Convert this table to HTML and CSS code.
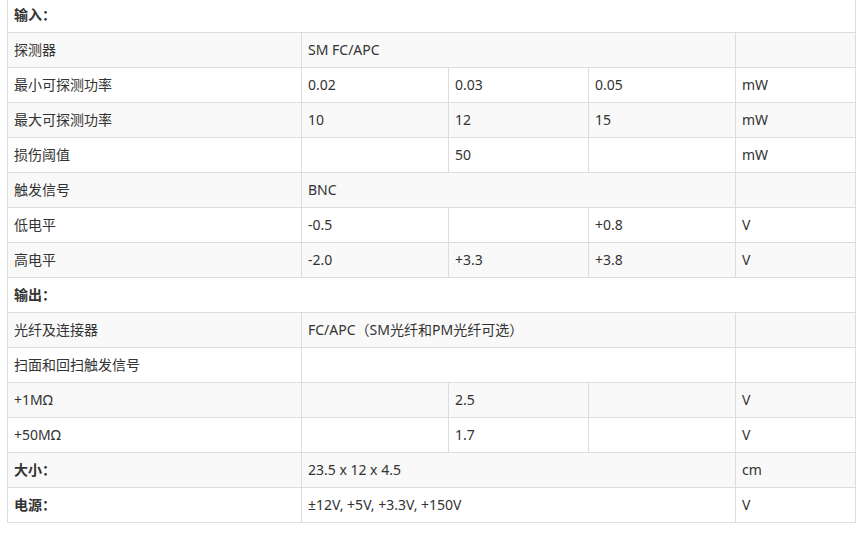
FILE: index.html
```html
<!DOCTYPE html>
<html lang="zh-CN">
<head>
<meta charset="utf-8">
<title>参数</title>
<link rel="stylesheet" href="styles.css">
</head>
<body>
<table class="spec">
  <colgroup>
    <col class="c1"><col class="c2"><col class="c3"><col class="c4"><col class="c5">
  </colgroup>
  <tbody>
    <tr><td colspan="5" class="b">输入：</td></tr>
    <tr><td>探测器</td><td colspan="3">SM FC/APC</td><td></td></tr>
    <tr><td>最小可探测功率</td><td>0.02</td><td>0.03</td><td>0.05</td><td>mW</td></tr>
    <tr><td>最大可探测功率</td><td>10</td><td>12</td><td>15</td><td>mW</td></tr>
    <tr><td>损伤阈值</td><td></td><td>50</td><td></td><td>mW</td></tr>
    <tr><td>触发信号</td><td colspan="3">BNC</td><td></td></tr>
    <tr><td>低电平</td><td>-0.5</td><td></td><td>+0.8</td><td>V</td></tr>
    <tr><td>高电平</td><td>-2.0</td><td>+3.3</td><td>+3.8</td><td>V</td></tr>
    <tr><td colspan="5" class="b">输出：</td></tr>
    <tr><td>光纤及连接器</td><td colspan="3">FC/APC（SM光纤和PM光纤可选）</td><td></td></tr>
    <tr><td>扫面和回扫触发信号</td><td colspan="3"></td><td></td></tr>
    <tr><td>+1MΩ</td><td></td><td>2.5</td><td></td><td>V</td></tr>
    <tr><td>+50MΩ</td><td></td><td>1.7</td><td></td><td>V</td></tr>
    <tr><td class="b">大小：</td><td colspan="3">23.5 x 12 x 4.5</td><td>cm</td></tr>
    <tr><td class="b">电源：</td><td colspan="3">±12V, +5V, +3.3V, +150V</td><td>V</td></tr>
  </tbody>
</table>
</body>
</html>
```
FILE: styles.css
```css
html, body {
  margin: 0;
  padding: 0;
  background: #fff;
}
body {
  font-family: "Noto Sans", "Noto Sans CJK SC", sans-serif;
  font-size: 14px;
  color: #333;
}
.spec {
  border-collapse: collapse;
  table-layout: fixed;
  width: 848px;
  margin: -3px 0 0 7px;
}
.c1 { width: 294px; }
.c2 { width: 147px; }
.c3 { width: 140px; }
.c4 { width: 147px; }
.c5 { width: 120px; }
.spec td {
  border: 1px solid #ddd;
  padding: 7px 6px;
  height: 20px;
  line-height: 20px;
  vertical-align: middle;
  white-space: nowrap;
}
.spec tr:nth-child(even) td {
  background: #f9f9f9;
}
.spec td.b {
  font-weight: bold;
}
```
